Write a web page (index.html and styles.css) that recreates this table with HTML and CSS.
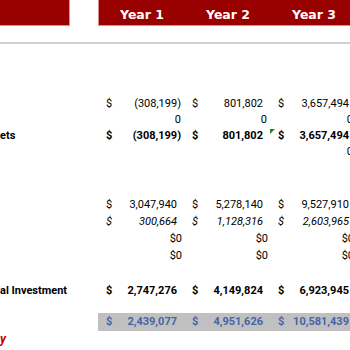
FILE: index.html
```html
<!DOCTYPE html>
<html>
<head>
<meta charset="utf-8">
<link rel="stylesheet" href="styles.css">
</head>
<body>
<div class="sheet">
  <div class="row head">
    <div class="hcell"></div>
    <div></div>
    <div class="hyears"><span>Year 1</span><span>Year 2</span><span>Year 3</span></div>
  </div>
  <div class="rule"></div>

  <div class="block b1">
    <div class="row r16">
      <div></div><div></div>
      <div class="cell neg"><span>$</span><span>(308,199)</span></div>
      <div class="cell pos"><span>$</span><span>801,802</span></div>
      <div class="cell pos"><span>$</span><span>3,657,494</span></div>
    </div>
    <div class="row r16">
      <div></div><div></div>
      <div class="cell zero"><span></span><span>0</span></div>
      <div class="cell zero"><span></span><span>0</span></div>
      <div class="cell zero"><span></span><span>0</span></div>
    </div>
    <div class="row r16 bold">
      <div class="label">ets</div><div></div>
      <div class="cell neg"><span>$</span><span>(308,199)</span></div>
      <div class="cell pos"><span>$</span><span>801,802</span></div>
      <div class="cell pos flagged"><i class="flag"></i><span>$</span><span>3,657,494</span></div>
    </div>
    <div class="row r16">
      <div></div><div></div>
      <div class="cell zero"></div>
      <div class="cell zero"></div>
      <div class="cell zero"><span></span><span>0</span></div>
    </div>
  </div>

  <div class="block b2">
    <div class="row r17">
      <div></div><div></div>
      <div class="cell pos"><span>$</span><span>3,047,940</span></div>
      <div class="cell pos"><span>$</span><span>5,278,140</span></div>
      <div class="cell pos"><span>$</span><span>9,527,910</span></div>
    </div>
    <div class="row r17 ital">
      <div></div><div></div>
      <div class="cell pos"><span>$</span><span>300,664</span></div>
      <div class="cell pos"><span>$</span><span>1,128,316</span></div>
      <div class="cell pos"><span>$</span><span>2,603,965</span></div>
    </div>
    <div class="row r17">
      <div></div><div></div>
      <div class="cell dz"><span></span><span>$0</span></div>
      <div class="cell dz"><span></span><span>$0</span></div>
      <div class="cell dz"><span></span><span>$0</span></div>
    </div>
    <div class="row r17">
      <div></div><div></div>
      <div class="cell dz"><span></span><span>$0</span></div>
      <div class="cell dz"><span></span><span>$0</span></div>
      <div class="cell dz"><span></span><span>$0</span></div>
    </div>
  </div>

  <div class="block b3">
    <div class="row r17 bold">
      <div class="label wide">al Investment</div>
      <div class="cell pos"><span>$</span><span>2,747,276</span></div>
      <div class="cell pos"><span>$</span><span>4,149,824</span></div>
      <div class="cell pos"><span>$</span><span>6,923,945</span></div>
    </div>
  </div>

  <div class="block b4">
    <div class="row r18 bold total">
      <div></div><div></div>
      <div class="cell pos"><span>$</span><span>2,439,077</span></div>
      <div class="cell pos"><span>$</span><span>4,951,626</span></div>
      <div class="cell pos"><span>$</span><span>10,581,439</span></div>
    </div>
    <div class="row r17">
      <div class="label red">y</div>
    </div>
  </div>
</div>
</body>
</html>
```

FILE: styles.css
```css
html, body {
  margin: 0;
  padding: 0;
  background: #ffffff;
}
body {
  width: 350px;
  height: 350px;
  overflow: hidden;
  font-family: Roboto, "Liberation Sans", sans-serif;
  font-size: 11px;
  color: #000000;
}
.sheet {
  width: 356px;
}
.row {
  display: grid;
  grid-template-columns: 70px 28px 86px 86px 86px;
}
.head {
  height: 26px;
}
.hcell {
  background: #990000;
  border: 1px solid #d88a8a;
  border-top: none;
  border-left: none;
}
.hyears {
  grid-column: 3 / 6;
  display: grid;
  grid-template-columns: 86px 86px 86px;
  background: #990000;
  border: 1px solid #d88a8a;
  border-top: none;
  border-right: none;
  color: #ffffff;
  font-family: "DejaVu Sans", sans-serif;
  font-weight: bold;
  font-size: 12.5px;
  padding-top: 5px;
  box-sizing: border-box;
  text-align: center;
}
.hyears span {
  display: block;
  line-height: 20px;
}
.rule {
  margin-top: 16px;
  height: 2px;
  background: #d2d2d2;
}
.b1 { margin-top: 52px; }
.b2 { margin-top: 36px; }
.b3 { margin-top: 18px; }
.b4 { margin-top: 14px; }
.r16 { height: 16px; line-height: 16px; }
.r17 { height: 17px; line-height: 17px; }
.r18 { height: 18px; line-height: 18px; }
.cell {
  display: flex;
  justify-content: space-between;
  padding-left: 8px;
  white-space: nowrap;
  position: relative;
}
.pos { padding-right: 7px; }
.neg { padding-right: 3px; }
.zero { padding-right: 3px; }
.dz { padding-right: 2px; }
.bold { font-weight: bold; }
.ital .cell { font-style: italic; }
.label {
  white-space: nowrap;
  overflow: visible;
}
.wide {
  grid-column: 1 / 3;
}
.red {
  color: #c00000;
  font-style: italic;
  font-weight: bold;
  font-size: 12px;
}
.total {
  color: #4565a8;
}
.total .cell {
  background: #c0c0c0;
}
.flag {
  position: absolute;
  left: 0;
  top: 1px;
  width: 0;
  height: 0;
  border-top: 5px solid #1f8a1f;
  border-right: 5px solid transparent;
}
```
